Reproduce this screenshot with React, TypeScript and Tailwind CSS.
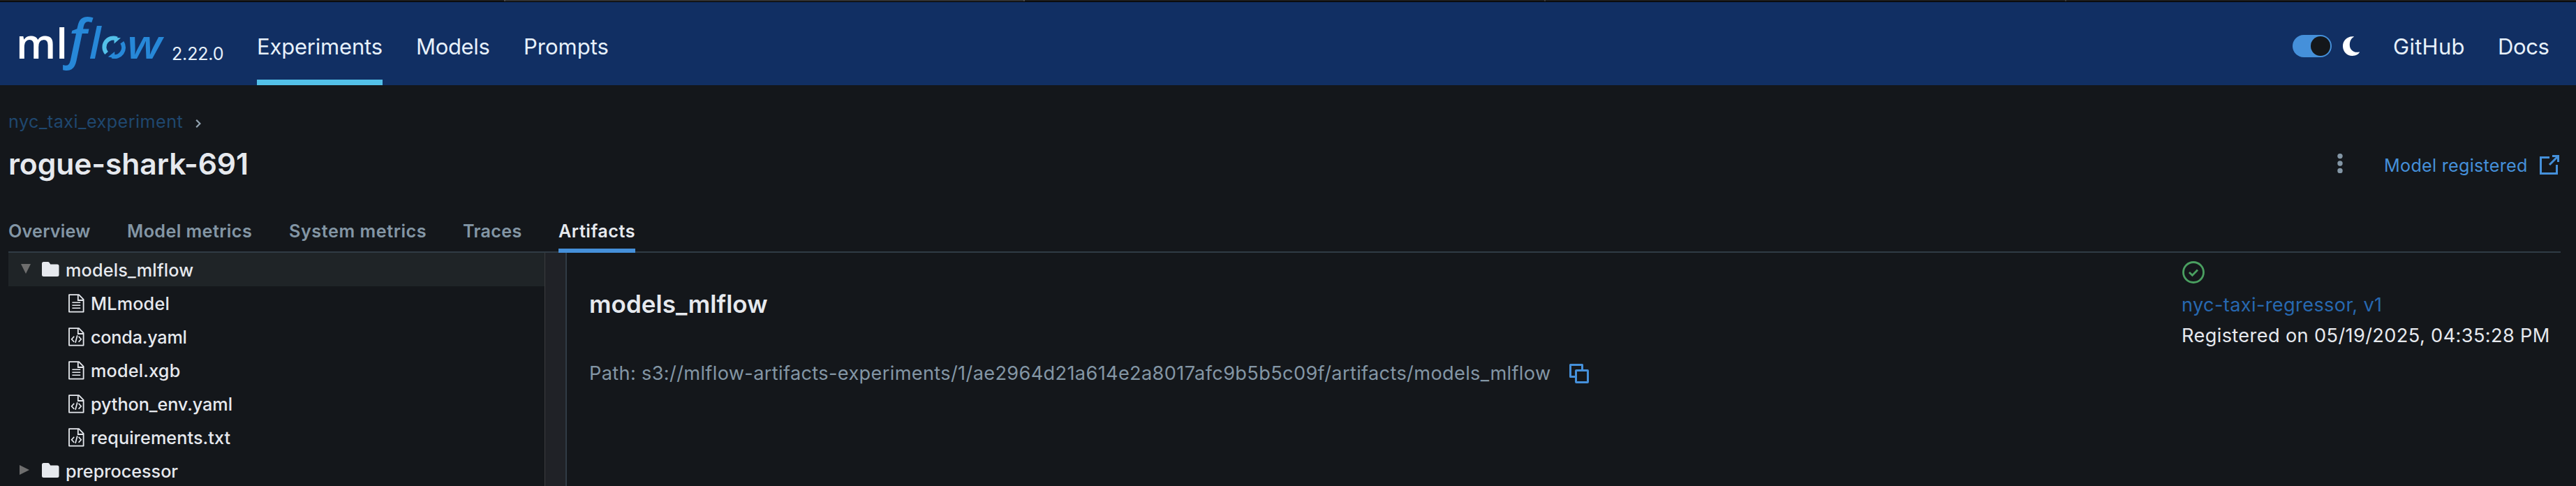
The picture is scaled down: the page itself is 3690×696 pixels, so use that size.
import React from "react";

function Logo() {
  return (
    <svg className="h-[119px] w-[245px] shrink-0 overflow-visible" viewBox="0 3 245 119" fontFamily="'Open Sans', sans-serif" fontWeight={600}>
      <text x="23" y="84" fontSize="60" fontWeight={650} fill="#ffffff" textLength="74" lengthAdjust="spacingAndGlyphs">ml</text>
      <g fill="#2788d8" fontStyle="italic">
        <text x="98.5" y="83" fontSize="76">f</text>
        <text x="127.5" y="84" fontSize="61.5">l</text>
        <text transform="translate(181.9 84) scale(1.17 1)" fontSize="57">w</text>
      </g>
      <path d="M152.6 76 A13 13 0 0 1 167.5 55.5" fill="none" stroke="#53c0e8" strokeWidth="6" />
      <path d="M173 54.2 L163.6 62.4 L163.4 54Z" fill="#53c0e8" />
      <path d="M174.8 60.8 A13 13 0 0 1 160.5 80.6" fill="none" stroke="#2788d8" strokeWidth="6" />
      <path d="M154.8 81.6 L164.2 74 L164.4 83Z" fill="#2788d8" />
    </svg>
  );
}

function FolderIcon() {
  return (
    <svg className="h-[21px] w-[25px] shrink-0" viewBox="0 0 25 21" fill="#e6e9ee">
      <path d="M2.5 0 H8.5 Q10 0 10.8 1.2 L12.2 3.4 H22 Q24.5 3.4 24.5 6 V18.5 Q24.5 21 22 21 H2.5 Q0 21 0 18.5 V2.5 Q0 0 2.5 0Z" />
    </svg>
  );
}

function FileIcon({ code }: { code?: boolean }) {
  return (
    <svg className="h-[27px] w-[23px] shrink-0" viewBox="0 0 23 27" fill="none" stroke="#e6e9ee" strokeWidth="1.8">
      <path d="M1 1.2 H15 L21.6 7.8 V25.6 H1Z" strokeLinejoin="round" />
      <path d="M13.8 1.2 V9 H21.6" />
      {code ? (
        <path d="M8.2 12.8 L4.6 16.8 L8.2 20.8 M14.6 12.8 L18.2 16.8 L14.6 20.8 M12.8 11.2 L10 21.8" strokeWidth="1.7" />
      ) : (
        <path d="M5.4 12.2 H17.2 M5.4 16.2 H17.2 M5.4 20.2 H17.2" strokeWidth="1.6" />
      )}
    </svg>
  );
}

const files = [
  { name: "MLmodel", code: false, track: "tracking-[0.2px]" },
  { name: "conda.yaml", code: true, track: "tracking-[-0.2px]" },
  { name: "model.xgb", code: false, track: "tracking-[0.2px]" },
  { name: "python_env.yaml", code: true, track: "tracking-[-0.05px]" },
  { name: "requirements.txt", code: true, track: "tracking-[0.1px]" },
];

const tabs = [
  { name: "Overview", cls: "w-[122px] tracking-[0.2px]" },
  { name: "Model metrics", cls: "w-[184px] tracking-[0.4px]" },
  { name: "System metrics", cls: "w-[201px] tracking-[0.56px]" },
  { name: "Traces", cls: "w-[89px] tracking-[0.28px]" },
];

function NavItem({ label, className, active }: { label: string; className: string; active?: boolean }) {
  return (
    <a className={`flex h-full shrink-0 flex-col whitespace-nowrap pt-10 text-[31px] leading-[48px] text-[#e7f1fb] ${className}`}>
      {label}
      {active && <span className="mt-auto h-2 w-full bg-[#53c0e8]" />}
    </a>
  );
}

function Header() {
  return (
    <header className="flex h-[119px] shrink-0 bg-[#112f63]">
      <Logo />
      <span className="w-[123px] shrink-0 pl-px pt-[58px] text-[25px] leading-8 tracking-[-0.15px] text-[#e7f1fb]">2.22.0</span>
      <nav className="flex gap-12">
        <NavItem label="Experiments" className="w-[180px] tracking-[-0.2px]" active />
        <NavItem label="Models" className="w-[106px] tracking-[-0.34px]" />
        <NavItem label="Prompts" className="w-[124px]" />
      </nav>
      <div className="ml-auto flex pr-[38px]">
        <div className="mt-[47px] mr-4 flex h-8 w-14 justify-end rounded-full bg-[#4590da] p-0.5">
          <span className="h-7 w-7 rounded-full bg-[#14171b]" />
        </div>
        <svg className="mt-[49px] mr-12 h-7 w-6" viewBox="0 0 24 28" fill="#ffffff">
          <path d="M16.2 0.4 C6.5 -1 0 6 0 14 C0 22 6 28 13.5 28 C19 28 23 25.5 24 22.3 C16 24.5 9.8 19.5 9.8 12.2 C9.8 7 12 2.6 16.2 0.4Z" />
        </svg>
        <NavItem label="GitHub" className="mr-12 w-[102px] tracking-[0.28px]" />
        <NavItem label="Docs" className="w-[74px] tracking-[-0.4px]" />
      </div>
    </header>
  );
}

export default function App() {
  return (
    <div className="flex h-[696px] w-full flex-col overflow-hidden bg-[#14171b] font-['Inter',sans-serif] text-[#e6e9ee]">
      <div className="flex h-[3px] shrink-0 border-b border-black bg-[#1c1c1c]">
        <span className="w-[722px]" />
        <span className="w-[746px] border-x-2 border-[#4a4a4a] bg-[#303030]" />
        <span className="w-[746px] border-r-2 border-[#3a3a3a]" />
        <span className="w-[746px] border-r-2 border-[#3a3a3a]" />
      </div>
      <Header />

      <div className="ml-3 mr-[22px] flex shrink-0 flex-col">
        <div className="flex h-[84px] items-start pt-8 text-[25.2px] leading-[41px]">
          <a className="w-[268px] tracking-[0.45px] text-[#1f476f]">nyc_taxi_experiment</a>
          <svg className="mt-[16.5px] h-3 w-2" viewBox="0 0 8 12" fill="none" stroke="#93a4b1" strokeWidth="2.2">
            <path d="M1.2 0.8 L6.4 6 L1.2 11.2" />
          </svg>
        </div>
        <div className="flex h-[57px]">
          <h1 className="text-[42.6px] font-semibold leading-[57px] tracking-[-0.1px]">rogue-shark-691</h1>
          <svg className="ml-auto mr-[59px] mt-[14px] h-7 w-2" viewBox="0 0 8 28" fill="#8396a5">
            <circle cx="4" cy="3.6" r="3.7" />
            <circle cx="4" cy="14" r="3.7" />
            <circle cx="4" cy="24.4" r="3.7" />
          </svg>
          <a className="w-[223px] pt-[5px] text-[25.2px] leading-[52px] tracking-[0.26px] text-[#4590da]">Model registered</a>
          <svg className="mr-0.5 mt-4 h-7 w-7" viewBox="0 0 28 28" fill="none" stroke="#4590da" strokeWidth="3">
            <path d="M14 3.5 H1.5 V26.5 H24.5 V14" />
            <path d="M18 1.5 H26.5 V10 M26.5 1.5 L14 14" />
          </svg>
        </div>
        <div className="mt-[35px] flex h-16 gap-12 border-b-2 border-[#303b45] text-[25.2px] font-semibold leading-[63px] text-[#8396a5]">
          {tabs.map((t) => (
            <span key={t.name} className={`shrink-0 whitespace-nowrap pt-0.5 ${t.cls}`}>{t.name}</span>
          ))}
          <span className="h-16 w-[110px] shrink-0 whitespace-nowrap border-b-[6px] border-[#4590da] pt-0.5 tracking-[0.55px] text-[#e6e9ee]">
            Artifacts
          </span>
        </div>
      </div>

      <div className="ml-3 flex min-h-0 flex-1">
        <div className="w-[768px] shrink-0 text-[25.2px] font-[450] leading-[51px]">
          <div className="flex h-12 bg-[#1f2427] pl-[18px]">
            <svg className="mr-4 mt-4 h-3.5 w-3.5" viewBox="0 0 14 14" fill="#6e6e6e">
              <path d="M0 0 H14 L7 14Z" />
            </svg>
            <span className="mt-[13px] flex h-[21px]"><FolderIcon /></span>
            <span className="ml-[9px] tracking-[0.2px]">models_mlflow</span>
          </div>
          {files.map((f) => (
            <div key={f.name} className="flex h-12 pl-[86px]">
              <span className="mt-[11px] flex h-[27px]"><FileIcon code={f.code} /></span>
              <span className={`ml-[9px] ${f.track}`}>{f.name}</span>
            </div>
          ))}
          <div className="flex h-12 pl-4">
            <svg className="mr-[18px] mt-4 h-3.5 w-3.5" viewBox="0 0 14 14" fill="#6e6e6e">
              <path d="M0 0 V14 L14 7Z" />
            </svg>
            <span className="mt-[13px] flex h-[21px]"><FolderIcon /></span>
            <span className="ml-[9px]">preprocessor</span>
          </div>
        </div>
        <div className="w-8 shrink-0 border-l border-r-2 border-l-[#3b3c3e] border-r-[#303b45] bg-[#202227]" />
        <main className="flex min-w-0 flex-1 pl-8">
          <div className="flex flex-col pt-[49px]">
            <h2 className="text-[35px] font-semibold leading-[48px] tracking-[0.05px]">models_mlflow</h2>
            <div className="mt-[55px] flex items-center text-[27.2px] leading-10 text-[#8396a5]">
              <span className="w-[1404px] shrink-0 whitespace-nowrap pt-px tracking-[0.33px]">
                Path: s3://mlflow-artifacts-experiments/1/ae2964d21a614e2a8017afc9b5b5c09f/artifacts/models_mlflow
              </span>
              <svg className="h-7 w-7 shrink-0" viewBox="0 0 28 28" fill="none" stroke="#4590da" strokeWidth="3">
                <path d="M8 18.5 H1.5 V1.5 H18.5 V8" strokeLinejoin="round" />
                <rect x="9.5" y="9.5" width="17" height="17" rx="0.5" />
              </svg>
            </div>
          </div>
          <div className="ml-auto flex w-[565px] flex-col whitespace-nowrap pt-3 text-[27.2px] leading-[44px]">
            <svg className="mb-[9px] ml-px h-8 w-8" viewBox="0 0 32 32" fill="none" stroke="#4a9f60" strokeWidth="2.8">
              <circle cx="16" cy="16" r="14.5" />
              <path d="M10 16 L14.4 20.2 L22 12.4" />
            </svg>
            <a className="tracking-[0.34px] text-[#2768b0]">nyc-taxi-regressor, v1</a>
            <span className="tracking-[0.36px]">Registered on 05/19/2025, 04:35:28 PM</span>
          </div>
        </main>
      </div>
    </div>
  );
}
